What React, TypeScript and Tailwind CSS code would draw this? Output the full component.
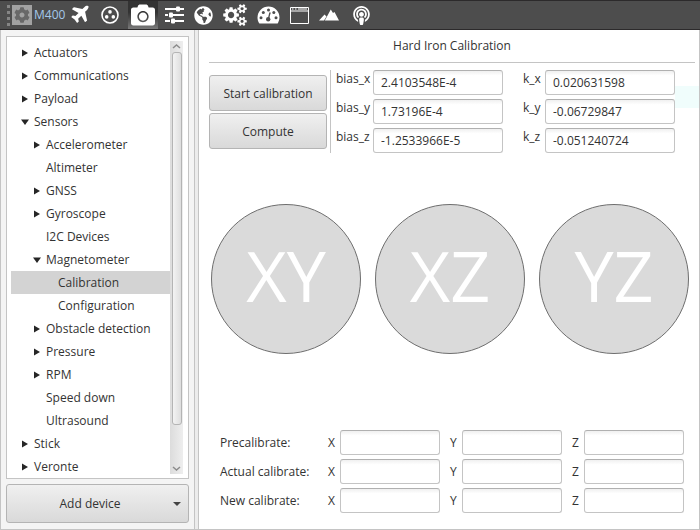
import { useState } from "react"
import type { ReactNode } from "react"
import { FaCamera, FaCog, FaGlobeAmericas, FaPodcast } from "react-icons/fa"

type TreeItem = {
  label: string
  level: number
  state?: "open" | "closed"
}

const TREE: TreeItem[] = [
  { label: "Actuators", level: 0, state: "closed" },
  { label: "Communications", level: 0, state: "closed" },
  { label: "Payload", level: 0, state: "closed" },
  { label: "Sensors", level: 0, state: "open" },
  { label: "Accelerometer", level: 1, state: "closed" },
  { label: "Altimeter", level: 1 },
  { label: "GNSS", level: 1, state: "closed" },
  { label: "Gyroscope", level: 1, state: "closed" },
  { label: "I2C Devices", level: 1 },
  { label: "Magnetometer", level: 1, state: "open" },
  { label: "Calibration", level: 2 },
  { label: "Configuration", level: 2 },
  { label: "Obstacle detection", level: 1, state: "closed" },
  { label: "Pressure", level: 1, state: "closed" },
  { label: "RPM", level: 1, state: "closed" },
  { label: "Speed down", level: 1 },
  { label: "Ultrasound", level: 1 },
  { label: "Stick", level: 0, state: "closed" },
  { label: "Veronte", level: 0, state: "closed" },
]

const INDENT = ["pl-[10px]", "pl-[22px]", "pl-[34px]"]

const BIAS = [
  ["bias_x", "2.4103548E-4"],
  ["bias_y", "1.73196E-4"],
  ["bias_z", "-1.2533966E-5"],
]

const GAINS = [
  ["k_x", "0.020631598"],
  ["k_y", "-0.06729847"],
  ["k_z", "-0.051240724"],
]

const INPUT =
  "h-[25px] min-w-0 rounded-[3px] border border-[#c4c4c4] border-t-[#b0b0b0] bg-white bg-linear-to-b from-[#f0f0f0] to-white to-20% px-[7px] text-[#333]"

const BUTTON =
  "rounded-[3px] border border-[#b4b4b4] bg-linear-to-b from-[#f0f0f0] to-[#d9d9d9] text-[#333]"

const PlaneIcon = () => (
  <svg width="22" height="22" viewBox="0 0 1792 1792" fill="currentColor" className="-mx-[2px]">
    <path d="M1568 160q44 52 12 148t-108 172l-161 161 160 696q5 19-12 33l-128 96q-7 6-19 6-4 0-7-1-15-3-21-16l-279-508-259 259 53 194q5 17-8 31l-96 96q-9 9-23 9h-2q-15-2-24-13l-189-252-252-189q-11-7-13-23-1-13 9-25l96-97q9-9 23-9 6 0 8 1l194 53 259-259-508-279q-14-8-17-24-2-16 9-27l128-128q14-13 30-8l665 159 160-160q76-76 172-108t148 12z" />
  </svg>
)

const CogsIcon = () => (
  <svg width="24" height="22" viewBox="0 0 1920 1792" fill="currentColor">
    <path d="M896 896q0-106-75-181t-181-75-181 75-75 181 75 181 181 75 181-75 75-181zm768 512q0-52-38-90t-90-38-90 38-38 90q0 53 37.5 90.5t90.5 37.5 90.5-37.5 37.5-90.5zm0-1024q0-52-38-90t-90-38-90 38-38 90q0 53 37.5 90.5t90.5 37.5 90.5-37.5 37.5-90.5zm-384 421v185q0 10-7 19.5t-16 10.5l-155 24q-11 35-32 76 34 48 90 115 7 11 7 20 0 12-7 19-23 30-82.5 89.5t-78.5 59.5q-11 0-21-7l-115-90q-37 19-77 31-11 108-23 155-7 24-30 24h-186q-11 0-20-7.5t-10-17.5l-23-153q-34-10-75-31l-118 89q-7 7-20 7-11 0-21-8-144-133-144-160 0-9 7-19 10-14 41-53t47-61q-23-44-35-82l-152-24q-10-1-17-9.5t-7-19.5v-185q0-10 7-19.5t16-10.5l155-24q11-35 32-76-34-48-90-115-7-11-7-20 0-12 7-20 22-30 82-89t79-59q11 0 21 7l115 90q34-18 77-32 11-108 23-154 7-24 30-24h186q11 0 20 7.5t10 17.5l23 153q34 10 75 31l118-89q8-7 20-7 11 0 21 8 144 133 144 160 0 8-7 19-12 16-42 54t-45 60q23 48 34 82l152 23q10 2 17 10.5t7 19.5zm640 533v140q0 16-149 31-12 27-30 52 51 113 51 138 0 4-4 7-122 71-124 71-8 0-46-47t-52-68q-20 2-30 2t-30-2q-14 21-52 68t-46 47q-2 0-124-71-4-3-4-7 0-25 51-138-18-25-30-52-149-15-149-31v-140q0-16 149-31 13-29 30-52-51-113-51-138 0-4 4-7 4-2 35-20t59-34 30-16q8 0 46 46.5t52 67.5q20-2 30-2t30 2q51-71 92-112l6-2q4 0 124 70 4 3 4 7 0 25-51 138 17 23 30 52 149 15 149 31zm0-1024v140q0 16-149 31-12 27-30 52 51 113 51 138 0 4-4 7-122 71-124 71-8 0-46-47t-52-68q-20 2-30 2t-30-2q-14 21-52 68t-46 47q-2 0-124-71-4-3-4-7 0-25 51-138-18-25-30-52-149-15-149-31v-140q0-16 149-31 13-29 30-52-51-113-51-138 0-4 4-7 4-2 35-20t59-34 30-16q8 0 46 46.5t52 67.5q20-2 30-2t30 2q51-71 92-112l6-2q4 0 124 70 4 3 4 7 0 25-51 138 17 23 30 52 149 15 149 31z" />
  </svg>
)

const CirclesIcon = () => (
  <svg width="18" height="18" viewBox="0 0 18 18">
    <circle cx="9" cy="9" r="8" fill="none" stroke="currentColor" strokeWidth="1.6" />
    <circle cx="9" cy="5.9" r="1.8" fill="currentColor" />
    <circle cx="5.7" cy="10.9" r="1.8" fill="currentColor" />
    <circle cx="12.3" cy="10.9" r="1.8" fill="currentColor" />
  </svg>
)

const SlidersIcon = () => (
  <svg width="19" height="18" viewBox="0 0 19 18" fill="currentColor">
    <path d="M0 2h11v2H0zM15 2h4v2h-4zM0 8h3v2H0zM8 8h11v2H8zM0 14h5v2H0zM10 14h9v2h-9z" />
    <rect x="11" y="0.5" width="4" height="5" rx="1" />
    <rect x="4" y="6.5" width="4" height="5" rx="1" />
    <rect x="6" y="12.5" width="4" height="5" rx="1" />
  </svg>
)

const GaugeIcon = () => (
  <svg width="23" height="18" viewBox="0 0 23 18">
    <path
      d="M11.5.5A11 11 0 0 0 .5 11.5c0 2.2.6 4 1.5 5.5q.4.6 1 .6h17q.6 0 1-.6a11 11 0 0 0 1.5-5.5A11 11 0 0 0 11.5.5z"
      fill="currentColor"
    />
    <g fill="#4d4d4d">
      <circle cx="4" cy="11.8" r="1.5" />
      <circle cx="6.3" cy="6.4" r="1.5" />
      <circle cx="11.5" cy="4" r="1.5" />
      <circle cx="16.8" cy="6.4" r="1.5" />
      <circle cx="19" cy="11.8" r="1.5" />
      <circle cx="11.2" cy="13.3" r="2.2" />
    </g>
    <path d="M11.4 13l1.5-6" stroke="#4d4d4d" strokeWidth="1.3" strokeLinecap="round" />
  </svg>
)

const WindowIcon = () => (
  <svg width="19" height="17" viewBox="0 0 19 17">
    <path d="M.5.5h18v16H.5zM.5 4h18" fill="none" stroke="currentColor" />
    <path d="M2 2h1.5M5 2h1.5M8 2h9" stroke="currentColor" />
  </svg>
)

const TerrainIcon = () => (
  <svg width="20" height="12" viewBox="0 0 20 12" fill="currentColor">
    <path d="M0 11.5 5.5 5.5 7.500 7.5 5 11.500zM5.800 11.500 11.800.5 14 4 15.500 3 20 11.500z" />
  </svg>
)

const Arrow = ({ state }: { state?: "open" | "closed" }) => (
  <svg width="8" height="8" viewBox="0 0 8 8" fill="#262626" className="shrink-0">
    {state === "closed" && <path d="M1 0.5 7 4 1 7.5z" />}
    {state === "open" && <path d="M0 1.5h8L4 7z" />}
  </svg>
)

const ToolButton = ({ label, className = "px-[5px]", children }: { label: string, className?: string, children: ReactNode }) => (
  <button type="button" aria-label={label} className={`flex h-full items-center ${className}`}>
    {children}
  </button>
)

const Toolbar = () => (
  <header className="flex h-[30px] shrink-0 items-center border-y border-[#2c2a2b] bg-[#4d4d4d] pl-[7px] text-white">
    <div className="flex flex-col gap-[3px]">
      <span className="size-[3px] bg-[#858585]" />
      <span className="size-[3px] bg-[#858585]" />
      <span className="size-[3px] bg-[#858585]" />
      <span className="size-[3px] bg-[#858585]" />
    </div>
    <button type="button" className="flex items-center gap-[2px] pl-[2px] text-[#a4c8ea]">
      <span className="flex size-5 items-center justify-center bg-[#a2a2a2] text-[#686868]">
        <FaCog size={16} />
      </span>
      M400
    </button>
    <ToolButton label="Aircraft" className="px-1.5"><PlaneIcon /></ToolButton>
    <ToolButton label="Control" className="px-1.5"><CirclesIcon /></ToolButton>
    <ToolButton label="Devices" className="mr-[2px] ml-[3px] bg-linear-to-b from-[#333] from-40% to-[#7a7a7a] px-[3px]"><FaCamera size={24} /></ToolButton>
    <ToolButton label="Settings"><SlidersIcon /></ToolButton>
    <ToolButton label="Navigation"><FaGlobeAmericas size={19} /></ToolButton>
    <ToolButton label="Automations"><CogsIcon /></ToolButton>
    <ToolButton label="Panel"><GaugeIcon /></ToolButton>
    <ToolButton label="Window"><WindowIcon /></ToolButton>
    <ToolButton label="Terrain"><TerrainIcon /></ToolButton>
    <ToolButton label="Communications" className="px-2"><FaPodcast size={19} /></ToolButton>
  </header>
)

const Scrollbar = () => (
  <div className="mb-1 flex w-[13px] shrink-0 flex-col items-center bg-linear-to-r from-[#dcdcdc] to-[#eeeeee]">
    <svg width="9" height="8" viewBox="0 0 9 8" fill="none" stroke="#8c8c8c" strokeWidth="1.5" className="mt-px">
      <path d="M1 6 4.5 3 8 6" />
    </svg>
    <div className="mt-[2px] w-[10px] grow-[370] rounded-[3px] border border-[#b4b4b4] bg-linear-to-r from-[#f3f3f3] to-[#dedede]" />
    <div className="grow-[40]" />
    <svg width="9" height="8" viewBox="0 0 9 8" fill="none" stroke="#8c8c8c" strokeWidth="1.5" className="mb-px">
      <path d="M1 2 4.5 5 8 2" />
    </svg>
  </div>
)

const Sidebar = () => {
  const [ selected, setSelected ] = useState("Calibration")

  return (
    <aside className="flex w-[194px] shrink-0 flex-col gap-[5px] border-l border-[#c4c4c4] bg-[#f4f4f4] px-[5px] py-1.5">
      <div className="flex grow border border-[#c4c4c4] bg-white pt-1 pr-[5px] pl-1">
        <ul className="min-w-0 grow">
          {TREE.map((item) => (
            <li key={item.label}>
              <button
                type="button"
                onClick={() => setSelected(item.label)}
                className={`flex h-[23px] w-full items-center gap-[5px] text-left whitespace-nowrap ${INDENT[item.level]} ${
                  selected === item.label ? "bg-[#d3d3d3]" : ""
                }`}
              >
                <Arrow state={item.state} />
                {item.label}
              </button>
            </li>
          ))}
        </ul>
        <Scrollbar />
      </div>
      <button type="button" className={`flex h-[39px] items-center pr-[7px] ${BUTTON}`}>
        <span className="grow">Add device</span>
        <svg width="8" height="4" viewBox="0 0 8 4" fill="#444">
          <path d="M0 0h8L4 4z" />
        </svg>
      </button>
    </aside>
  )
}

const ValueColumn = ({ rows, labelWidth }: { rows: string[][], labelWidth: string }) => (
  <div className="flex flex-col gap-1">
    {rows.map(([name, value]) => (
      <div key={name} className="flex">
        <label htmlFor={name} className={`leading-[18px] ${labelWidth}`}>{name}</label>
        <input id={name} defaultValue={value} className={`w-[130px] ${INPUT}`} />
      </div>
    ))}
  </div>
)

const CalibrationPanel = () => (
  <main className="flex min-w-0 grow flex-col border-r border-[#c4c4c4] bg-white">
    <h1 className="mr-1 ml-[10px] border-b border-[#c4c4c4] py-[7px] text-center leading-[18px]">
      Hard Iron Calibration
    </h1>
    <div className="relative mt-[7px] flex pl-[10px]">
      <div className="flex w-[118px] flex-col justify-center gap-[2px]">
        <button type="button" className={`h-9 pt-[2px] ${BUTTON}`}>Start calibration</button>
        <button type="button" className={`h-9 pt-[2px] ${BUTTON}`}>Compute</button>
      </div>
      <div className="mr-[5px] ml-[3px] w-px bg-[#c4c4c4]" />
      <ValueColumn rows={BIAS} labelWidth="w-[37px]" />
      <div className="w-5" />
      <ValueColumn rows={GAINS} labelWidth="w-[22px]" />
      <span className="absolute top-4 right-0 h-[22px] w-6 bg-[#f0fdfc]" />
    </div>
    <div className="my-auto flex justify-center gap-[14px] pb-[25px] pl-[2px]">
      {["XY", "XZ", "YZ"].map((plane) => (
        <div
          key={plane}
          className="flex size-[150px] items-center justify-center rounded-full border border-[#6e6e6e] bg-[#dadada] pb-2 text-[70px] leading-none text-white"
        >
          {plane}
        </div>
      ))}
    </div>
    <div className="flex flex-col gap-1 pb-4 pl-[21px]">
      {["Precalibrate", "Actual calibrate", "New calibrate"].map((name) => (
        <div key={name} role="group" aria-label={name} className="flex items-center">
          <span className="w-[98px]">{name}:</span>
          {["X", "Y", "Z"].map((axis) => (
            <div key={axis} className="flex items-center">
              <label htmlFor={`${name}-${axis}`} className="w-[22px] pl-[10px]">{axis}</label>
              <input id={`${name}-${axis}`} className={`w-[100px] ${INPUT}`} />
            </div>
          ))}
        </div>
      ))}
    </div>
  </main>
)

export default function App() {
  return (
    <div className="flex min-h-screen flex-col bg-white font-['Open_Sans','Noto_Sans',sans-serif] text-[12px] leading-4 text-[#333]">
      <Toolbar />
      <div className="flex grow border-b border-[#c4c4c4]">
        <Sidebar />
        <div className="w-[5px] shrink-0 border-x border-[#c4c4c4] bg-[#ececec]" />
        <CalibrationPanel />
      </div>
    </div>
  )
}
